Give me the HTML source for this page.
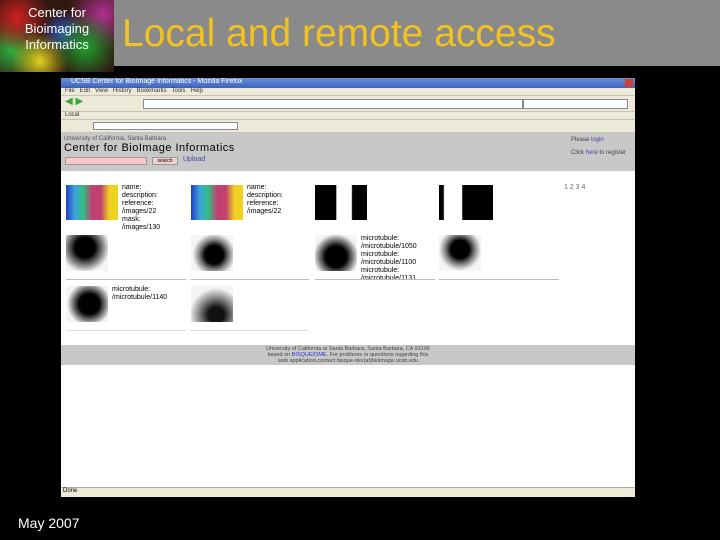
<!DOCTYPE html>
<html><head><style>
*{margin:0;padding:0;box-sizing:border-box}
body{width:720px;height:540px;background:#000;position:relative;overflow:hidden;font-family:"Liberation Sans",sans-serif}
.abs{position:absolute}
.logo{left:0;top:0;width:114px;height:72px;background:radial-gradient(circle at 15% 25%,#d02020 0,transparent 30%),radial-gradient(circle at 75% 65%,#20a030 0,transparent 35%),radial-gradient(circle at 35% 85%,#e0d020 0,transparent 30%),radial-gradient(circle at 90% 20%,#b03090 0,transparent 30%),radial-gradient(circle at 55% 45%,#3050c0 0,transparent 30%),radial-gradient(circle at 10% 70%,#30b040 0,transparent 30%),#301810;color:#fff;font-size:13px;line-height:16px;text-align:center;padding-top:5px}
.bar{left:114px;top:0;width:606px;height:66px;background:#8a8a8a}
.title{left:122px;top:12px;color:#f2c21e;font-size:39px;white-space:nowrap}
.win{left:61px;top:78px;width:574px;height:419px;background:#fff;overflow:hidden}
.tb{left:0;top:0;width:574px;height:10px;background:linear-gradient(#6a90d8,#3a64c0);color:#fff;font-size:7px;padding-left:10px}
.tool{background:#ece9d8;left:0;width:574px;font-size:6px;color:#333;padding-left:4px;border-bottom:1px solid #c8c4b0}
.ph{left:0;top:55px;width:574px;height:38px;background:#c8c8c8}
.ft{left:0;top:267px;width:574px;height:20px;background:#c8c8c8;font-size:5.5px;text-align:center;color:#444;line-height:6px;padding-top:1px}
.st{left:0;top:409px;width:574px;height:10px;background:#ece9d8;font-size:6px;padding-left:2px;border-top:1px solid #aaa}
.img{position:absolute}
.tx{position:absolute;font-size:7px;line-height:8px;color:#000}
.hr{position:absolute;height:1px;background:#bbb}
</style></head><body>
<div class="abs logo">Center for<br>Bioimaging<br>Informatics</div>
<div class="abs bar"></div>
<div class="abs title">Local and remote access</div>
<div class="abs win">
 <div class="abs tb">UCSB Center for BioImage Informatics - Mozilla Firefox</div>
 <div class="abs" style="right:2px;top:1px;width:8px;height:8px;background:#d04030"></div>
 <div class="abs tool" style="top:10px;height:8px">File &nbsp; Edit &nbsp; View &nbsp; History &nbsp; Bookmarks &nbsp; Tools &nbsp; Help</div>
 <div class="abs tool" style="top:18px;height:16px"><div class="abs" style="left:82px;top:3px;width:380px;height:10px;background:#fff;border:1px solid #889"></div><div class="abs" style="left:462px;top:3px;width:105px;height:10px;background:#fff;border:1px solid #889"></div><span style="color:#3a3;font-size:10px">◀ ▶ </span></div>
 <div class="abs tool" style="top:34px;height:8px">Local</div>
 <div class="abs tool" style="top:42px;height:13px"><div class="abs" style="left:32px;top:2px;width:145px;height:8px;background:#fff;border:1px solid #889"></div></div>
 <div class="abs ph">
  <div class="tx" style="left:3px;top:2px;font-size:6px;color:#555">University of California, Santa Barbara</div>
  <div class="tx" style="left:3px;top:9px;font-size:11px;line-height:12px;letter-spacing:.5px">Center for BioImage Informatics</div>
  <div class="abs" style="left:4px;top:24px;width:82px;height:8px;background:#f8c8c8;border:1px solid #999"></div>
  <div class="abs" style="left:91px;top:24px;width:26px;height:8px;background:#f0d0d0;border:1px solid #999;font-size:5px;text-align:center">search</div>
  <div class="tx" style="left:122px;top:23px;color:#44a">Upload</div>
  <div class="tx" style="left:510px;top:3px;font-size:6px;color:#444">Please <span style="color:#44a">login</span></div>
  <div class="tx" style="left:510px;top:16px;font-size:6px;color:#444">Click <span style="color:#44a">here</span> to register</div>
 </div>
 <div class="img" style="left:5px;top:107px;width:52px;height:35px;background:linear-gradient(90deg,#2040c0,#40a0e0,#30c080,#c04070,#c04070,#f0d020,#f0d020)"></div>
 <div class="tx" style="left:61px;top:106px">name:<br>description:<br>reference:<br>/images/22<br>mask:<br>/images/130</div>
 <div class="img" style="left:130px;top:107px;width:52px;height:35px;background:linear-gradient(90deg,#2040c0,#40a0e0,#30c080,#c04070,#c04070,#f0d020,#f0d020)"></div>
 <div class="tx" style="left:186px;top:106px">name:<br>description:<br>reference:<br>/images/22</div>
 <div class="img" style="left:254px;top:107px;width:52px;height:35px;background:linear-gradient(90deg,#000 40%,#fff 42%,#fff 70%,#000 72%)"></div>
 <div class="img" style="left:378px;top:107px;width:54px;height:35px;background:linear-gradient(90deg,#000 8%,#fff 10%,#fff 42%,#000 44%)"></div>
 <div class="tx" style="left:503px;top:106px;color:#666">1 2 3 4</div>
 <div class="img" style="left:5px;top:157px;width:42px;height:36px;background:radial-gradient(circle at 45% 35%,#000 30%,#888 55%,#f4f4f4 75%)"></div>
 <div class="img" style="left:130px;top:157px;width:42px;height:36px;background:radial-gradient(circle at 55% 55%,#000 30%,#888 50%,#f4f4f4 70%)"></div>
 <div class="img" style="left:254px;top:157px;width:42px;height:36px;background:radial-gradient(circle at 50% 60%,#000 35%,#777 55%,#f4f4f4 75%)"></div>
 <div class="tx" style="left:300px;top:157px">microtubule:<br>/microtubule/1050<br>microtubule:<br>/microtubule/1100<br>microtubule:<br>/microtubule/1131</div>
 <div class="img" style="left:378px;top:157px;width:42px;height:36px;background:radial-gradient(circle at 50% 40%,#000 30%,#888 50%,#f4f4f4 70%)"></div>
 <div class="hr" style="left:5px;top:201px;width:120px"></div>
 <div class="hr" style="left:130px;top:201px;width:118px"></div>
 <div class="hr" style="left:254px;top:201px;width:120px"></div>
 <div class="hr" style="left:378px;top:201px;width:120px"></div>
 <div class="img" style="left:5px;top:208px;width:42px;height:36px;background:radial-gradient(circle at 55% 50%,#000 35%,#777 55%,#f4f4f4 75%)"></div>
 <div class="tx" style="left:51px;top:208px">microtubule:<br>/microtubule/1140</div>
 <div class="img" style="left:130px;top:208px;width:42px;height:36px;background:radial-gradient(circle at 60% 80%,#111 20%,#888 45%,#f4f4f4 70%)"></div>
 <div class="hr" style="left:5px;top:252px;width:120px;background:#ddd"></div>
 <div class="hr" style="left:130px;top:252px;width:118px;background:#ddd"></div>
 <div class="abs ft">University of California at Santa Barbara, Santa Barbara, CA 93106<br>based on <span style="color:#33c">BISQUE/OME</span>. For problems or questions regarding this<br>web application,contact bisque-dev(at)bioimage.ucsb.edu</div>
 <div class="abs st">Done</div>
</div>
<div class="abs" style="left:18px;top:515px;color:#fff;font-size:14px">May 2007</div>
</body></html>
